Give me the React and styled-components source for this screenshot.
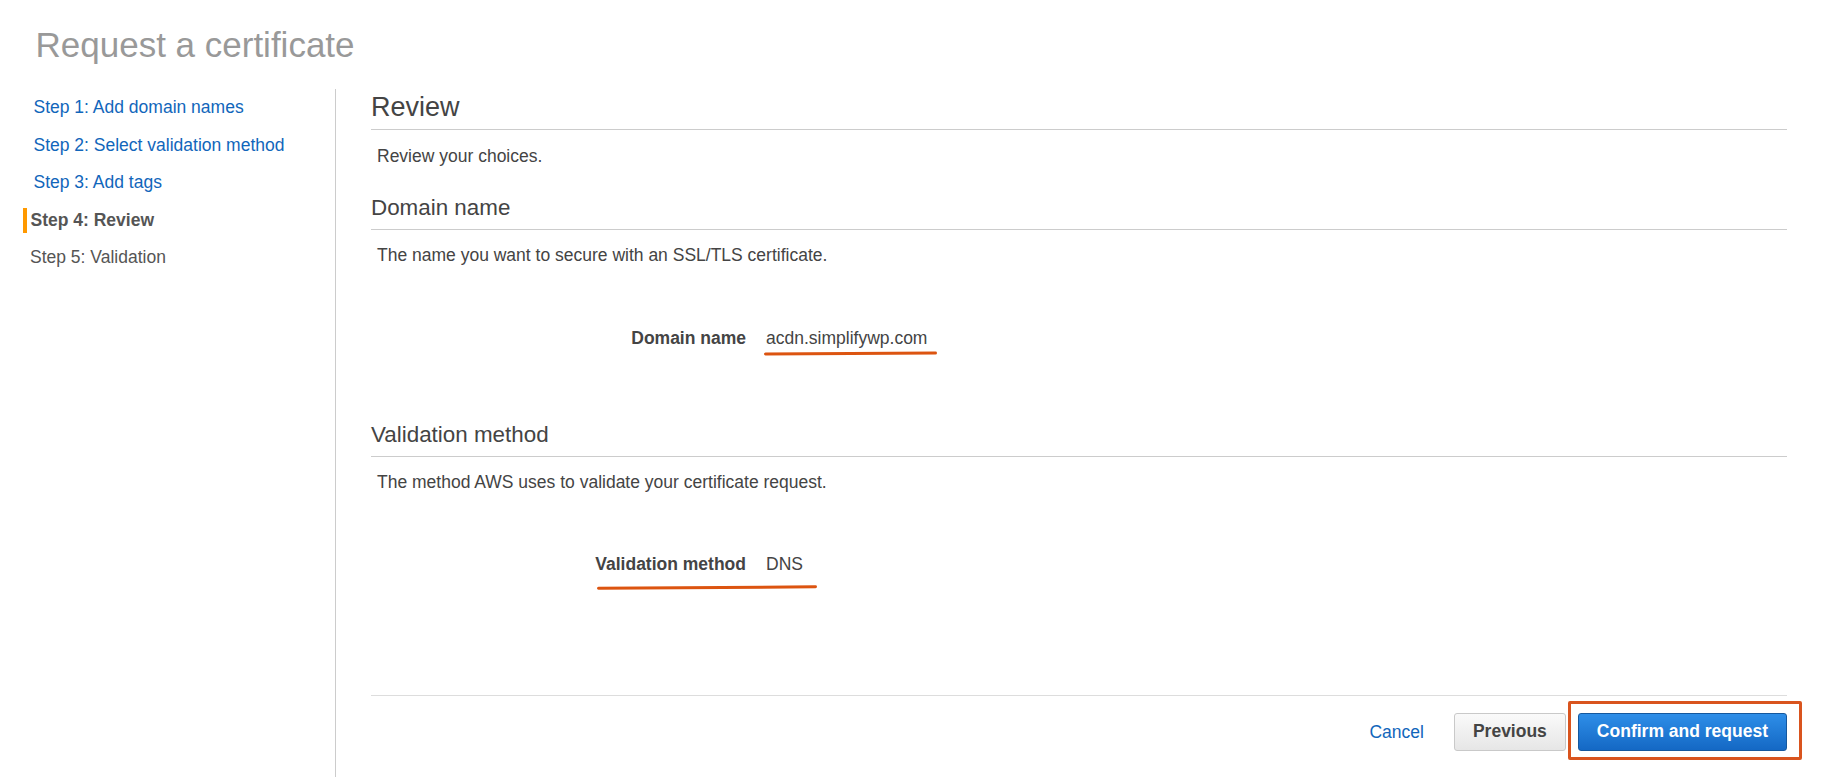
import React from 'react';
import styled, { createGlobalStyle } from 'styled-components';

const GlobalStyle = createGlobalStyle`
html, body {
    margin: 0;
    padding: 0;
    background: #fff;
}
body {
    font-family: "Liberation Sans", Arial, sans-serif;
    font-size: 17.5px;
    color: #444;
}
`;

const Page = styled.div`
display: flex;
flex-direction: column;
min-height: 100vh;
box-sizing: border-box;
`;

const Title = styled.h1`
margin: 25px 0 0 35.5px;
font-size: 35px;
line-height: 40px;
font-weight: normal;
color: #999;
`;

const Body = styled.div`
display: flex;
flex: 1;
margin-top: 24px;
`;

const Sidebar = styled.ul`
list-style: none;
margin: 0;
padding: 0;
width: 336px;
flex-shrink: 0;
border-right: 1px solid #ccc;
box-sizing: border-box;
`;

const Step = styled.li`
display: flex;
align-items: center;
height: 37.5px;
line-height: 37.5px;
padding-left: ${p => p.$current ? '23px' : p.$done ? '33.5px' : '30px'};
color: ${p => p.$done ? '#1166bb' : '#555'};
font-weight: ${p => p.$current ? 'bold' : 'normal'};
cursor: ${p => p.$done ? 'pointer' : 'default'};
${p => p.$current && `
    &::before {
        content: '';
        display: block;
        width: 4px;
        height: 25px;
        margin-right: 3.5px;
        background: #f90;
    }
`}
`;

const Main = styled.div`
flex: 1;
padding: 0 36px 0 35px;
display: flex;
flex-direction: column;
`;

const PageHeading = styled.h2`
margin: 2px 0 0 0;
font-size: 27px;
line-height: 32px;
font-weight: normal;
color: #444;
padding-bottom: 6px;
border-bottom: 1px solid #ccc;
`;

const SectionHeading = styled.h3`
margin: 0;
font-size: 22.4px;
line-height: 28px;
font-weight: normal;
color: #444;
padding-bottom: 7px;
border-bottom: 1px solid #ccc;
`;

const Desc = styled.p`
margin: ${p => p.$gap || 15}px 0 0 0;
padding-left: 6px;
line-height: 22px;
`;

const Section = styled.section`
margin-top: ${p => p.$gap || 0}px;
`;

const Row = styled.div`
position: relative;
display: grid;
grid-template-columns: 375px 1fr;
column-gap: 20px;
line-height: 22px;
margin-top: ${p => p.$gap}px;
`;

const Label = styled.div`
text-align: right;
font-weight: bold;
color: #444;
`;

const Value = styled.div`
color: #444;
`;

const Mark = styled.span`
position: absolute;
height: 3px;
border-radius: 2px;
background: #dc5410;
transform: rotate(-0.35deg);
`;

const Footer = styled.div`
display: flex;
justify-content: flex-end;
align-items: center;
margin-top: 120px;
padding-top: 17px;
border-top: 1px solid #ddd;
`;

const CancelLink = styled.a`
color: #1166bb;
text-decoration: none;
margin-right: 30px;
line-height: 22px;
cursor: pointer;
`;

const Button = styled.button`
display: block;
height: 38px;
padding: 0 18px;
border-radius: 3px;
font-family: "Liberation Sans", Arial, sans-serif;
font-size: 17.5px;
font-weight: bold;
cursor: pointer;
border: 1px solid ${p => p.$primary ? '#15589e' : '#c9c9c9'};
color: ${p => p.$primary ? '#fff' : '#444'};
background: ${p => p.$primary
    ? 'linear-gradient(to bottom, #2e8ee8, #1468c4)'
    : 'linear-gradient(to bottom, #fafafa, #e6e6e6)'};
`;

const Highlight = styled.div`
position: relative;
display: flex;
margin-left: 12px;
&::after {
    content: '';
    position: absolute;
    left: -10px;
    right: -15px;
    top: -12px;
    bottom: -9px;
    border: 3px solid #d9541e;
    border-radius: 2px;
    pointer-events: none;
}
`;

const steps = [
    { text: 'Step 1: Add domain names', state: 'done' },
    { text: 'Step 2: Select validation method', state: 'done' },
    { text: 'Step 3: Add tags', state: 'done' },
    { text: 'Step 4: Review', state: 'current' },
    { text: 'Step 5: Validation', state: 'todo' },
];

const App = () => {
    return (
        <Page>
            <GlobalStyle />
            <Title>Request a certificate</Title>
            <Body>
                <Sidebar>
                    {steps.map(s => (
                        <Step key={s.text} $done={s.state === 'done'} $current={s.state === 'current'}>
                            {s.text}
                        </Step>
                    ))}
                </Sidebar>
                <Main>
                    <PageHeading>Review</PageHeading>
                    <Desc>Review your choices.</Desc>

                    <Section $gap={27}>
                        <SectionHeading>Domain name</SectionHeading>
                        <Desc $gap={14}>The name you want to secure with an SSL/TLS certificate.</Desc>
                        <Row $gap={61}>
                            <Label>Domain name</Label>
                            <Value>acdn.simplifywp.com</Value>
                            <Mark style={{ left: 393, width: 173, top: 24.5 }} />
                        </Row>
                    </Section>

                    <Section $gap={71.5}>
                        <SectionHeading>Validation method</SectionHeading>
                        <Desc $gap={14}>The method AWS uses to validate your certificate request.</Desc>
                        <Row $gap={60}>
                            <Label>Validation method</Label>
                            <Value>DNS</Value>
                            <Mark style={{ left: 226, width: 220, top: 33.5 }} />
                        </Row>
                    </Section>

                    <Footer>
                        <CancelLink>Cancel</CancelLink>
                        <Button>Previous</Button>
                        <Highlight>
                            <Button $primary>Confirm and request</Button>
                        </Highlight>
                    </Footer>
                </Main>
            </Body>
        </Page>
    );
};

export default App;
